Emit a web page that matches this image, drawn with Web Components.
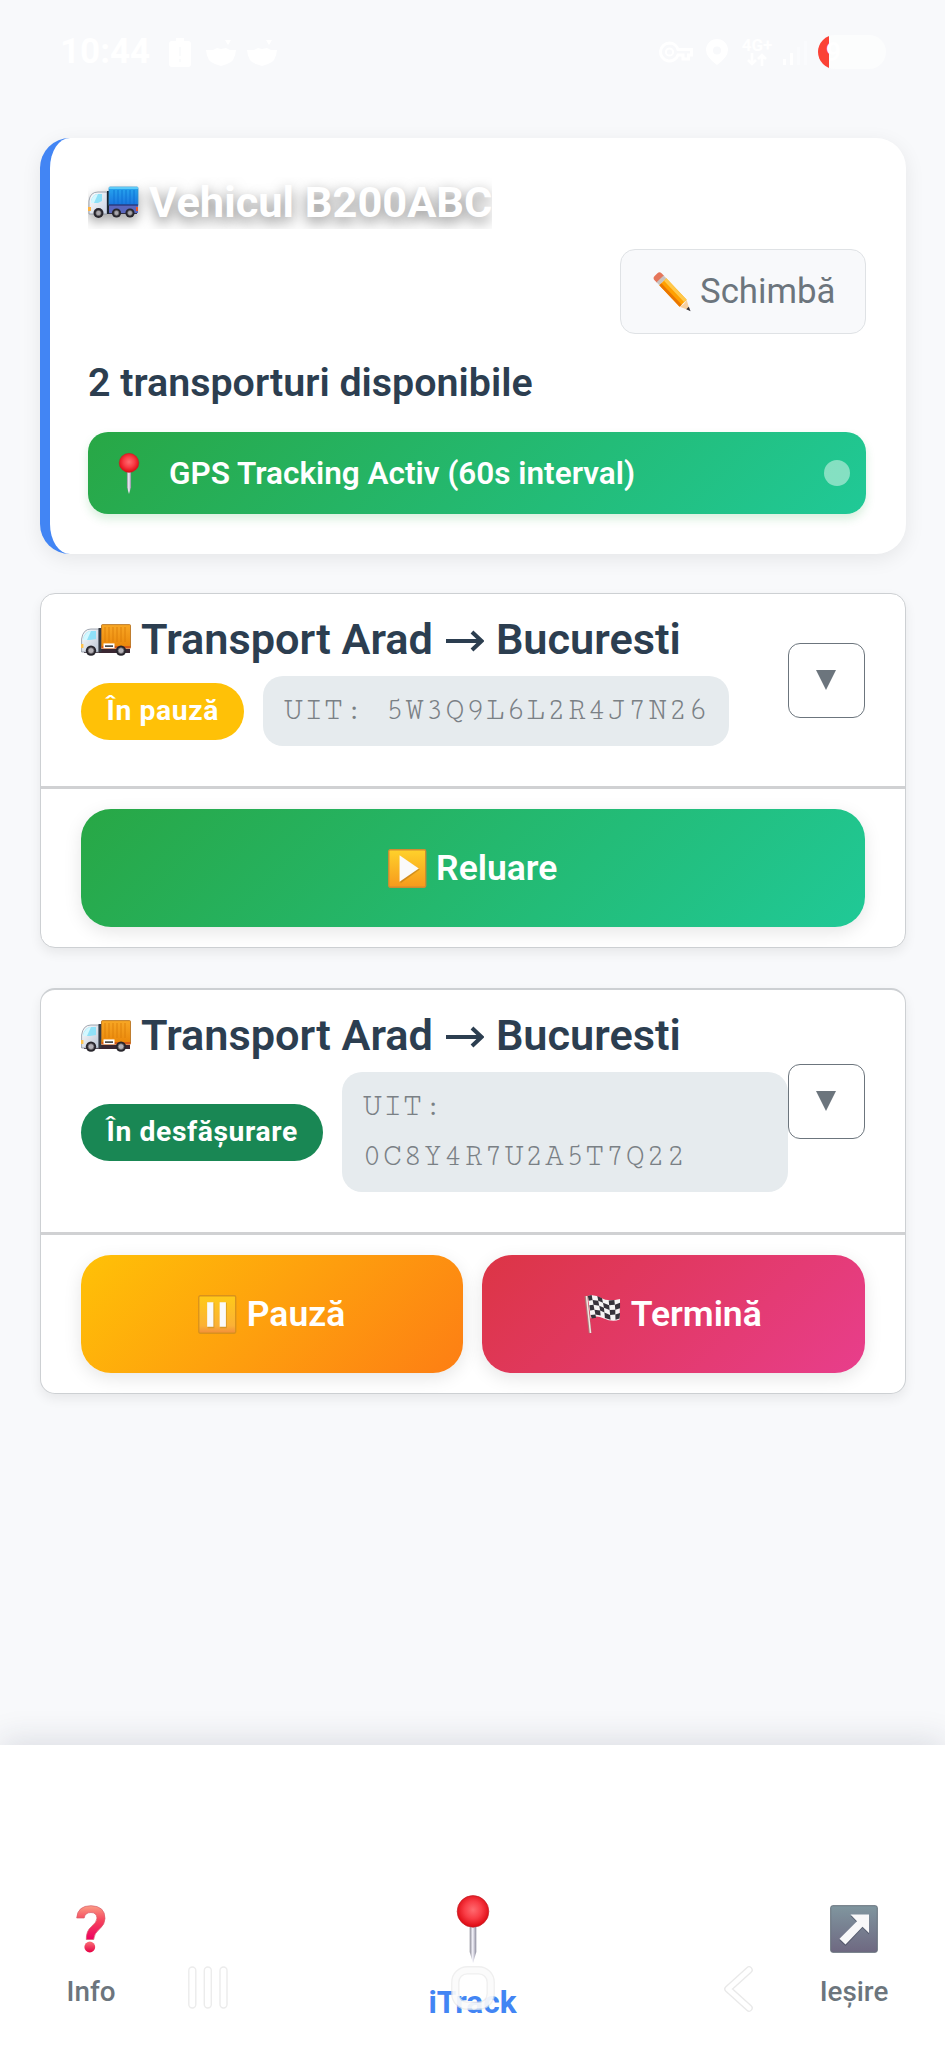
<!DOCTYPE html>
<html lang="ro">
<head>
<meta charset="utf-8">
<title>iTrack</title>
<style>
  body { margin: 0; background: #f8f9fb; font-family: Roboto, sans-serif; color: #2c3e50; }
</style>
</head>
<body>
<track-app></track-app>

<script>
const ICONS = {
  truckBlue: ['0 0 50 32', `
    <defs><linearGradient id="b" x2="0" y2="1"><stop stop-color="#27a7ef"/><stop offset="1" stop-color="#1972dd"/></linearGradient>
    <linearGradient id="c" x2="1" y2="1"><stop stop-color="#fff"/><stop offset="1" stop-color="#c9d3e3"/></linearGradient></defs>
    <rect x="3" y="25" width="46" height="3" fill="#303049"/>
    <path d="M1 28V15Q2 6 10 6H19V28Z" fill="url(#c)" stroke="#8a93a0" stroke-width=".8"/>
    <path d="M3 16Q4 8 10 8H14V15L10 17H3Z" fill="#8fe1f8"/><path d="M3 15Q5 8 10 8L6 17H3Z" fill="#d4f8ff"/>
    <rect x="19" y="5" width="2" height="23" fill="#1d2530"/>
    <rect x="21" y="1" width="29" height="19" rx="1" fill="url(#b)" stroke="#2d90c9" stroke-width=".8"/>
    <path d="M21 2H50" stroke="#6cd6fb" stroke-width="1.6"/>
    <path d="M26 4V18M30 4V18M34 4V18M38 4V18M42 4V18M46 4V18" stroke="#0b6fd2" stroke-width=".8"/>
    <rect x="21" y="19" width="29" height="8" fill="#5a67bd"/><path d="M21 19H50" stroke="#27306f" stroke-width="1.2"/>
    <rect x="0" y="21" width="3" height="4" fill="#ffb545"/><rect x="48" y="21" width="2" height="4" fill="#e8552c"/>
    <g fill="#28262d"><circle cx="10.5" cy="27" r="5"/><circle cx="28.5" cy="27" r="4.6"/><circle cx="42" cy="27" r="4.6"/></g>
    <g fill="#aaa7ad" stroke="#666" stroke-width=".7"><circle cx="10.5" cy="27" r="2.6"/><circle cx="28.5" cy="27" r="2.4"/><circle cx="42" cy="27" r="2.4"/></g>`],
  truckOrange: ['0 0 50 32', `
    <defs><linearGradient id="b" x2="0" y2="1"><stop stop-color="#f8a725"/><stop offset="1" stop-color="#ea8608"/></linearGradient>
    <linearGradient id="c" x2="1" y2="1"><stop stop-color="#fff"/><stop offset="1" stop-color="#bcc6d5"/></linearGradient></defs>
    <rect x="3" y="25" width="46" height="4" fill="#3a2732"/>
    <path d="M.6 28V15Q2 5 10 5H18V28Z" fill="url(#c)" stroke="#8a93a0" stroke-width=".8"/>
    <path d="M2 15Q4 7 10 7H15V15L9 16H2Z" fill="#8fe1f8"/><path d="M2 15Q5 7 10 7L6 16H2Z" fill="#d4f8ff"/>
    <rect x="17.5" y="4" width="3" height="24" fill="#333840"/>
    <rect x="20.5" y=".6" width="29" height="23.4" rx="1" fill="url(#b)" stroke="#b06a18" stroke-width=".8"/>
    <path d="M24 3V18M28 3V18M32 3V18M36 3V18M40 3V18M44 3V18" stroke="#d97b08" stroke-width=".8"/>
    <rect x="20.5" y="22" width="29" height="2.5" fill="#d65b16"/>
    <rect x="22.5" y="19.4" width="11" height="4.8" fill="#fff"/><rect x="24" y="21.4" width="8" height="1.4" fill="#222"/>
    <rect x="0" y="20" width="2.4" height="4" fill="#ffc34d"/>
    <g fill="#28262d"><circle cx="10" cy="26.6" r="5.2"/><circle cx="40" cy="26.6" r="5.2"/></g>
    <g fill="#b4b1b7" stroke="#68656a" stroke-width=".8"><circle cx="10" cy="26.6" r="2.9"/><circle cx="40" cy="26.6" r="2.9"/></g>`],
  pencil: ['0 0 40 40', `
    <g transform="translate(4.5 5) rotate(46)">
    <path d="M1 -5H5V5H1Q-2 5 -2 2V-2Q-2 -5 1 -5Z" fill="#e5765a"/>
    <rect x="4" y="-5" width="4" height="10" fill="#c9c3c0"/>
    <rect x="8" y="-5" width="30" height="10" fill="#ffa000"/><rect x="8" y="-5" width="30" height="3.4" fill="#ffc84a"/><rect x="8" y="2" width="30" height="3" fill="#ea7600"/>
    <path d="M38 -5L48 0L38 5Q40 0 38 -5Z" fill="#f7cf9f"/><path d="M44.5 -1.8L49 0L44.5 1.8Z" fill="#33313a"/></g>`],
  pin: ['0 0 32 68', `
    <defs><radialGradient id="r" cx=".5" cy=".45" r=".55"><stop stop-color="#ff6b70"/><stop offset=".5" stop-color="#f93d46"/><stop offset="1" stop-color="#dc0710"/></radialGradient>
    <linearGradient id="n"><stop stop-color="#8b8a96"/><stop offset=".45" stop-color="#f4f3fb"/><stop offset="1" stop-color="#8b8a9c"/></linearGradient></defs>
    <path d="M12.7 30H19.3V57L16 68L12.7 57Z" fill="url(#n)"/>
    <circle cx="16" cy="16.4" r="15.8" fill="url(#r)" stroke="#c11f26" stroke-width=".7"/>`],
  play: ['0 0 40 40', `
    <defs><linearGradient id="p" x2="0" y2="1"><stop stop-color="#ffd22b"/><stop offset="1" stop-color="#f7991c"/></linearGradient></defs>
    <rect x=".8" y=".8" width="38.4" height="38.4" rx="1.5" fill="url(#p)" stroke="#d08b30" stroke-width="1.4"/>
    <path d="M13 8L33 21L13 35Z" fill="#a96f18" opacity=".5"/><path d="M12 6.5L32 20L12 33.5Z" fill="#fafafa"/>`],
  pause: ['0 0 40 40', `
    <defs><linearGradient id="p" x2="0" y2="1"><stop stop-color="#ffca18"/><stop offset=".8" stop-color="#fbb136"/><stop offset="1" stop-color="#f28d3b"/></linearGradient></defs>
    <rect x=".8" y=".8" width="38.4" height="38.4" rx="1.5" fill="url(#p)" stroke="#d9921c" stroke-width="1.4"/>
    <path d="M10 8H17V34H10ZM23 8H30V34H23Z" fill="#c1871f" opacity=".55"/><path d="M9.5 7.5H16V32.5H9.5ZM22.5 7.5H29V32.5H22.5Z" fill="#fafafa"/>`],
  flag: ['0 0 38 40', `
    <path d="M3 1Q10 -1 17 3T37 4L36.5 25Q29 28 20 24T6 24Z" fill="#f6f4f4"/>
    <path d="M3 1L7 0 8 5 4 6ZM13 1L18 3.4 19 8 14 6ZM25 5.6L31 5 31.5 10 25.5 10.5ZM8 5L14 6 15 11 9 10ZM19 8L25.5 10.5 26 15.5 20 13ZM31.5 10L37 8 37 13.5 32 15ZM4.6 10.5L9 10 10 15 5.5 16ZM15 11L20 13 20.5 18 16 16ZM26 15.5L32 15 32 20 26.5 20.5ZM10 15L16 16 16.5 21 11 20ZM20.5 18L26.5 20.5 27 25.5 21 23.5ZM32 20L37 18.5 36.5 24 32.2 25.5ZM6 20.5L11 20 11.7 23.4 7 24Z" fill="#37333b"/>
    <path d="M1 1L5.5 39" stroke="#a97b79" stroke-width="3"/><path d="M1.6 1L5.8 39" stroke="#f1e4e0" stroke-width="1.6"/>`],
  question: ['0 0 30 48', `
    <defs><linearGradient id="q" x2="0" y2="1"><stop stop-color="#fb9d85"/><stop offset=".45" stop-color="#f5425c"/><stop offset="1" stop-color="#ee0061"/></linearGradient>
    <linearGradient id="d" x2="0" y2="1"><stop stop-color="#fa7177"/><stop offset="1" stop-color="#e60044"/></linearGradient></defs>
    <path d="M.7 13Q1.5 .7 15 .7Q29 1 29 13.5Q29 19.5 23.5 24Q18 28.5 17.7 34.5H10.3Q10 26 15.5 21.5Q21 17 21 13Q20.5 7.5 15 7.5Q9 7.5 8.2 13Z" fill="url(#q)" stroke="#d85d6c" stroke-width=".7"/>
    <circle cx="13.8" cy="42" r="5.4" fill="url(#d)"/>`],
  exit: ['0 0 48 48', `
    <defs><linearGradient id="e" x2="0" y2="1"><stop stop-color="#80969f"/><stop offset="1" stop-color="#6e6881"/></linearGradient></defs>
    <rect x=".7" y=".7" width="46.6" height="46.6" rx="2" fill="url(#e)" stroke="#65707b"/>
    <path d="M20.5 11H39V29.5L32.5 23L15.5 41L9.5 35.5L27 17.5Z" fill="#454b5e" opacity=".6"/>
    <path d="M20.5 9.5H39V28L32.5 21.8L15.5 39.4L9.5 33.8L27 16.2Z" fill="#f8f8f9"/>`],
  caret: ['0 0 20 20', `<path d="M0 0H20L10 20Z" fill="#6c757d"/>`],
  lowBattery: ['0 0 22 29', `<path d="M7 0H15V3H19Q22 3 22 6V26Q22 29 19 29H3Q0 29 0 26V6Q0 3 3 3H7Z" fill="#fff"/><path d="M11 9V18M11 21V24" stroke="#fafbfc" stroke-width="2"/>`],
  bowl: ['0 0 30 28', `<path d="M0 12H7L11 10 15 11 20 10 24 12H30Q29 24 21 26L15 28 9 26Q1 24 0 12Z" fill="#fff"/><path d="M19 2H25L22 7Z" fill="#fff"/>`],
  key: ['0 0 33 22', `<path d="M9.5 2A9 9 0 0 1 18 8.5H31.5V14H28.5V18H23V14H18A9 9 0 1 1 9.5 2Z" fill="none" stroke="#fff" stroke-width="3"/><circle cx="9.5" cy="11" r="3.6" fill="none" stroke="#fff" stroke-width="2"/>`],
  place: ['0 0 22 26', `<path fill-rule="evenodd" d="M11 0A11 11 0 0 1 22 11Q22 18 11 26Q0 18 0 11A11 11 0 0 1 11 0ZM11 7.5A4 4 0 1 0 11 15.5A4 4 0 0 0 11 7.5Z" fill="#fff"/>`],
  arrows: ['0 0 22 13', `<path d="M6 0V10M2 7L6 11 10 7M16 13V3M12 6L16 2 20 6" fill="none" stroke="#fff" stroke-width="2.6"/>`],
  signal: ['0 0 28 25', `<path d="M2 19H5V25H2ZM9 13H12V25H9Z" fill="#fff"/><path d="M16 7H19V25H16ZM23 1H26V25H23Z" fill="#fafbfd"/>`],
  recents: ['0 0 40 43', `<g fill="#fff" stroke="#ececec" stroke-width="1.4"><rect x=".8" y="1" width="7" height="41" rx="3.5"/><rect x="16.3" y="1" width="7" height="41" rx="3.5"/><rect x="32" y="1" width="7" height="41" rx="3.5"/></g>`],
  home: ['0 0 44 44', `<rect x="4.3" y="4.3" width="35.4" height="35.4" rx="12" fill="none" stroke="#e8e8e8" stroke-opacity=".7" stroke-width="8.4"/><rect x="4.3" y="4.3" width="35.4" height="35.4" rx="12" fill="none" stroke="#fff" stroke-opacity=".75" stroke-width="5.8"/>`],
  back: ['0 0 30 46', `<path d="M26 4L5 23 26 42" fill="none" stroke="#e9e9e9" stroke-width="7.6" stroke-linecap="round" stroke-linejoin="round"/><path d="M26 4L5 23 26 42" fill="none" stroke="#fff" stroke-width="5" stroke-linecap="round" stroke-linejoin="round"/>`]
};

function define(name, html, setup) {
  const template = document.createElement('template');
  template.innerHTML = html;
  customElements.define(name, class extends HTMLElement {
    constructor() {
      super();
      this.attachShadow({ mode: 'open' }).append(template.content.cloneNode(true));
    }
    connectedCallback() { if (setup) setup(this, this.shadowRoot); }
  });
}

define('ui-icon', `
  <style>:host{display:block;flex:none} svg{display:block;width:100%;height:100%;overflow:visible}</style>
  <svg preserveAspectRatio="none" aria-hidden="true"></svg>`,
  (el, root) => {
    const [box, body] = ICONS[el.getAttribute('name')];
    const svg = root.querySelector('svg');
    svg.setAttribute('viewBox', box);
    svg.innerHTML = body;
    el.style.width = el.getAttribute('w') + 'px';
    el.style.height = el.getAttribute('h') + 'px';
  });

define('status-bar', `
  <style>
    :host{display:flex;justify-content:space-between;height:104px;padding:0 59px 0 60px;color:#fff;box-sizing:border-box}
    .side{display:flex;align-items:center}
    time{font-weight:700;font-size:35px;line-height:40px;width:109px}
    .net{display:grid;justify-items:center;font-size:17px;line-height:15px;font-weight:700;margin:0 7px 0 12px;width:34px}
    .battery{display:flex;align-items:center;width:68px;height:34px;border-radius:17px;margin-left:9px;color:#fff;font-weight:700;font-size:26px;line-height:34px;background:linear-gradient(90deg,#fb4236 11px,#fcfdfd 11px);text-indent:8px;box-sizing:border-box}
  </style>
  <div class="side">
    <time>10:44</time>
    <ui-icon name="lowBattery" w="22" h="29"></ui-icon>
    <ui-icon name="bowl" w="30" h="28" style="margin:0 11px 0 15px"></ui-icon>
    <ui-icon name="bowl" w="30" h="28"></ui-icon>
  </div>
  <div class="side">
    <ui-icon name="key" w="33" h="22"></ui-icon>
    <ui-icon name="place" w="22" h="26" style="margin-left:13px"></ui-icon>
    <div class="net"><span>4G+</span><ui-icon name="arrows" w="22" h="13"></ui-icon></div>
    <ui-icon name="signal" w="28" h="25"></ui-icon>
    <div class="battery">9</div>
  </div>`);

define('vehicle-card', `
  <style>
    :host{display:flex;flex-direction:column;height:416px;box-sizing:border-box;padding:39px 39.5px 40px 38.5px;background:#fff;border-left:10px solid #4285f4;border-radius:30px;box-shadow:0 5px 20px rgba(0,0,0,.08)}
    h1{display:flex;align-self:flex-start;align-items:center;height:52px;margin:0;overflow:hidden;color:#fff;font-size:43.4px;line-height:52px;font-weight:700;white-space:nowrap;text-shadow:0 5px 14px rgba(0,0,0,.5)}
    h1 ui-icon{margin:0 11px 2px 0;filter:drop-shadow(0 5px 6px rgba(0,0,0,.35))}
    button{align-self:flex-end;display:flex;align-items:center;width:246px;height:84.5px;margin:20px 0 .5px;padding:0 0 0 31px;border:1.5px solid #dfe2e5;border-radius:15px;background:#f8f9fb;color:#6c757d;font:400 34.8px/50px Roboto,sans-serif;white-space:nowrap}
    button ui-icon{margin:0 8px 0 1px}
    p{margin:26px 0 0;font-size:39.4px;line-height:46px;font-weight:600}
    .gps{display:flex;align-items:center;height:82px;margin-top:26px;padding:0 16px 0 31px;border-radius:20px;background:linear-gradient(135deg,#28a745,#20c997);box-shadow:0 5px 10px rgba(40,167,69,.18);color:#fff;font-size:31.5px;font-weight:600}
    .gps span{flex:1;margin-left:30px}
    i{width:26px;height:26px;border-radius:50%;background:rgba(255,255,255,.45)}
  </style>
  <h1><ui-icon name="truckBlue" w="50" h="32"></ui-icon><span>Vehicul B200ABC</span></h1>
  <button><ui-icon name="pencil" w="39" h="40"></ui-icon><span>Schimbă</span></button>
  <p>2 transporturi disponibile</p>
  <div class="gps"><ui-icon name="pin" w="20" h="41"></ui-icon><span>GPS Tracking Activ (60s interval)</span><i></i></div>`);

define('status-badge', `
  <style>
    :host{display:block;flex:none;height:57px;padding:0 25px 0 26px;border-radius:29px;color:#fff;background:#198754;font-size:28.3px;line-height:56px;font-weight:700;letter-spacing:.6px;white-space:nowrap}
    :host([kind=paused]){background:#ffc107}
  </style><slot></slot>`);

define('action-button', `
  <style>
    :host{flex:1}
    button{display:flex;width:100%;height:118px;align-items:center;justify-content:center;gap:10px;border:0;border-radius:30px;color:#fff;font:600 35.5px/50px Roboto,sans-serif;background:linear-gradient(135deg,#28a745,#20c997);box-shadow:0 5px 18px rgba(0,0,0,.1)}
    :host([kind=pause]) button{background:linear-gradient(135deg,#ffc107,#fd7e14)}
    :host([kind=finish]) button{background:linear-gradient(135deg,#dc3545,#e83e8c)}
  </style>
  <button><slot name="icon"></slot><span><slot></slot></span></button>`);

define('transport-card', `
  <style>
    :host{display:block;box-sizing:border-box;background:#fff;border:1px solid #cdd0d3;border-radius:15px;box-shadow:0 5px 12px rgba(0,0,0,.07)}
    header{display:flex;align-items:center;padding:20px 39.5px 40px 40px;border-bottom:3px solid #d0d1d3}
    .info{flex:1;min-width:0}
    h2{display:flex;align-items:center;margin:0 0 10px;font-size:43.3px;line-height:52px;font-weight:600;white-space:nowrap}
    h2 ui-icon{margin:0 10px 0 .5px}
    h2 svg{width:38px;height:28px;margin:2px 12px 0 13px}
    .meta{display:flex;align-items:center;gap:19.5px}
    .uit{padding:10px 20px;border-radius:20px;background:#e6ebee;color:#7a8085;font:31.4px/50px "Cutive Mono","Liberation Mono",monospace;letter-spacing:1.25px}
    button{display:grid;place-items:center;width:77.5px;height:75px;flex:none;padding:0;border:1.5px solid #6c757d;border-radius:12px;background:#fff}
    .actions{display:flex;gap:19px;padding:20px 40px}
  </style>
  <header>
    <div class="info">
      <h2><ui-icon name="truckOrange" w="50" h="32"></ui-icon><span class="from"></span>
        <svg viewBox="0 0 38 28" role="img" aria-label="→"><path d="M0 14H35M26 5L35.5 14 26 23" fill="none" stroke="#2c3e50" stroke-width="4"/></svg>
        <span class="to"></span></h2>
      <div class="meta"><slot name="badge"></slot><div class="uit"></div></div>
    </div>
    <button aria-label="Detalii"><ui-icon name="caret" w="20" h="20"></ui-icon></button>
  </header>
  <div class="actions"><slot></slot></div>`,
  (el, root) => {
    root.querySelector('.from').textContent = el.getAttribute('from');
    root.querySelector('.to').textContent = el.getAttribute('to');
    root.querySelector('.uit').textContent = 'UIT: ' + el.getAttribute('uit');
  });

define('nav-item', `
  <style>
    :host{display:flex;flex-direction:column;align-items:center;color:#6c757d;font-size:27.8px;line-height:34px;font-weight:500;white-space:nowrap}
    :host([active]){color:#4285f4;font-size:31.5px;font-weight:700}
    .label{margin-top:22px}
    :host([active]) .label{margin-top:22.5px}
  </style>
  <slot name="icon"></slot><span class="label"><slot></slot></span>`);

define('bottom-nav', `
  <style>
    :host{display:grid;grid-template-columns:182px 1fr 182px;position:relative;height:303px;box-sizing:border-box;background:#fff;box-shadow:0 -5px 30px rgba(30,40,70,.13)}
    nav-item{padding-top:160px}
    nav-item[active]{padding-top:150px}
    .system{position:absolute;left:0;right:0;top:221px;display:flex;justify-content:space-between;padding:0 192px 0 188px}
  </style>
  <nav-item><ui-icon slot="icon" name="question" w="30" h="48"></ui-icon>Info</nav-item>
  <nav-item active><ui-icon slot="icon" name="pin" w="32" h="68"></ui-icon>iTrack</nav-item>
  <nav-item><ui-icon slot="icon" name="exit" w="48" h="48"></ui-icon>Ieșire</nav-item>
  <div class="system">
    <ui-icon name="recents" w="40" h="43"></ui-icon>
    <ui-icon name="home" w="44" h="44" style="margin-right:6px"></ui-icon>
    <ui-icon name="back" w="30" h="46"></ui-icon>
  </div>`);

define('track-app', `
  <style>
    :host{display:flex;flex-direction:column;width:945px;height:2048px;overflow:hidden;background:#f8f9fb}
    main{display:flex;flex-direction:column;flex:1;padding:34px 39.5px 0}
    transport-card{margin-top:39px}
    transport-card + transport-card{margin-top:40px;border-top-width:2px}
  </style>
  <status-bar></status-bar>
  <main>
    <vehicle-card></vehicle-card>
    <transport-card from="Transport Arad" to="Bucuresti" uit="5W3Q9L6L2R4J7N26">
      <status-badge slot="badge" kind="paused">În pauză</status-badge>
      <action-button><ui-icon slot="icon" name="play" w="38.5" h="39"></ui-icon>Reluare</action-button>
    </transport-card>
    <transport-card from="Transport Arad" to="Bucuresti" uit="0C8Y4R7U2A5T7Q22">
      <status-badge slot="badge">În desfășurare</status-badge>
      <action-button kind="pause"><ui-icon slot="icon" name="pause" w="38.5" h="39"></ui-icon>Pauză</action-button>
      <action-button kind="finish"><ui-icon slot="icon" name="flag" w="36" h="39"></ui-icon>Termină</action-button>
    </transport-card>
  </main>
  <bottom-nav></bottom-nav>`);
</script>
</body>
</html>
